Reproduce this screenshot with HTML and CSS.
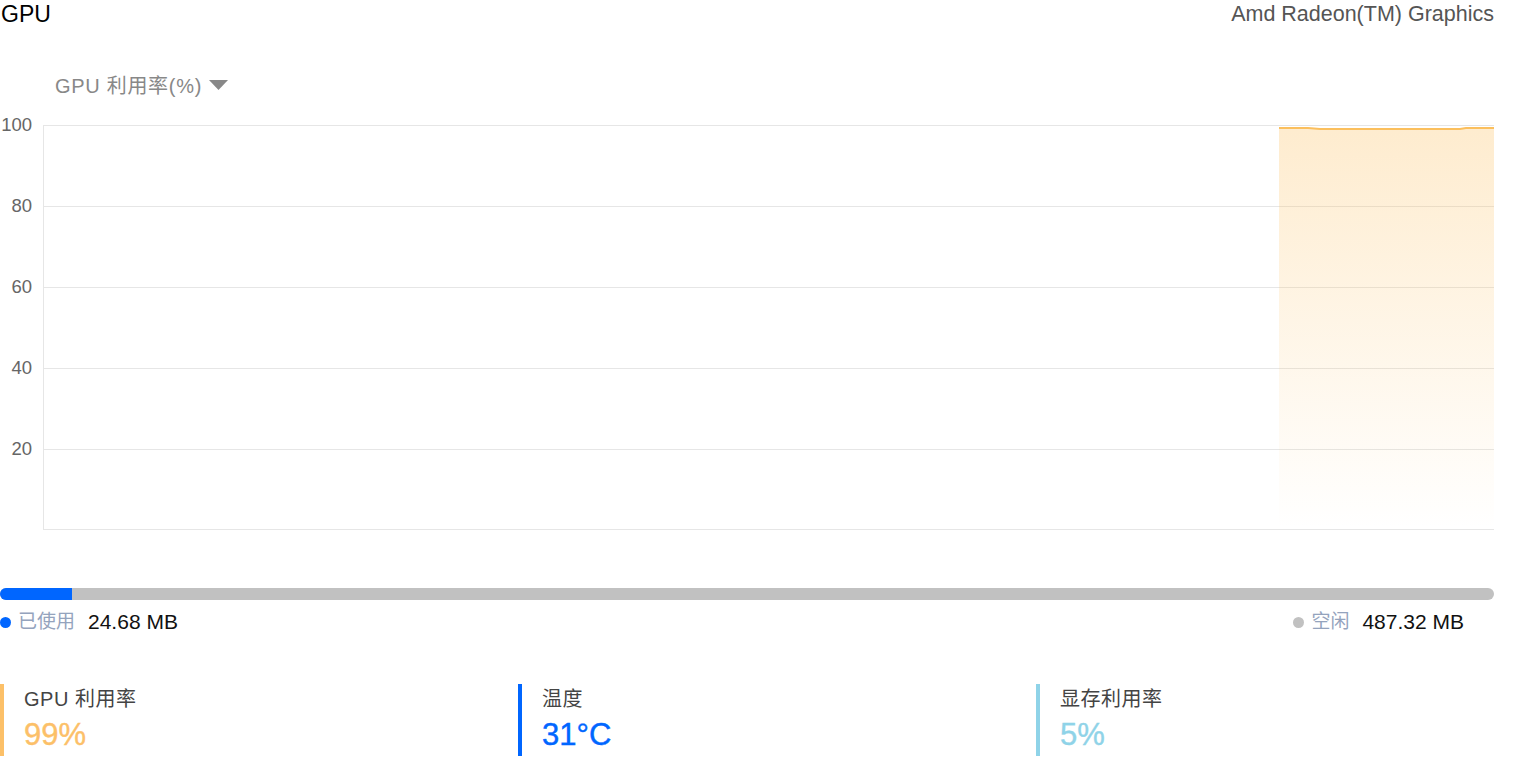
FILE: index.html
```html
<!DOCTYPE html>
<html lang="zh-CN">
<head>
  <meta charset="UTF-8" />
  <meta name="viewport" content="width=device-width, initial-scale=1" />
  <title>GPU</title>
  <link rel="stylesheet" href="styles.css">
</head>
<body>

  <div class="panel">
    <div class="cabecera">
      <span class="titulo">GPU</span>
      <span class="modelo">Amd Radeon(TM) Graphics</span>
    </div>

    <div class="grafica">
      <div class="grafica-titulo">
        GPU 利用率(%)
        <svg class="caret" width="19" height="10" viewBox="0 0 19 10"><path d="M0 0 L19 0 L9.5 10 Z" fill="#888"/></svg>
      </div>
      <svg class="lienzo" width="1494" height="440" viewBox="0 0 1494 440">
        <defs>
          <linearGradient id="relleno" x1="0" y1="0" x2="0" y2="1">
            <stop offset="0" stop-color="#fcbf5e" stop-opacity="0.3"/>
            <stop offset="1" stop-color="#fcbf5e" stop-opacity="0"/>
          </linearGradient>
        </defs>
        <g class="rejilla">
          <line x1="43" y1="15.5" x2="1494" y2="15.5"/>
          <line x1="43" y1="96.5" x2="1494" y2="96.5"/>
          <line x1="43" y1="177.5" x2="1494" y2="177.5"/>
          <line x1="43" y1="258.5" x2="1494" y2="258.5"/>
          <line x1="43" y1="339.5" x2="1494" y2="339.5"/>
          <line x1="43" y1="419.5" x2="1494" y2="419.5"/>
          <line x1="43.5" y1="15" x2="43.5" y2="420"/>
        </g>
        <g class="etiquetas">
          <text x="32" y="16">100</text>
          <text x="32" y="97">80</text>
          <text x="32" y="178">60</text>
          <text x="32" y="259">40</text>
          <text x="32" y="340">20</text>
        </g>
        <path d="M1279 18 L1308 18 L1320 19 L1460 19 L1466 18 L1494 18 L1494 419 L1279 419 Z" fill="url(#relleno)"/>
        <polyline points="1279,18 1308,18 1320,19 1460,19 1466,18 1494,18" fill="none" stroke="#fbbf5d" stroke-width="2"/>
      </svg>
    </div>

    <div class="barra">
      <div class="barra-uso" style="width: 4.82%"></div>
    </div>
    <div class="leyenda">
      <div class="leyenda-item">
        <span class="punto azul"></span>
        <span class="leyenda-nombre">已使用</span>
        <span class="leyenda-valor">24.68 MB</span>
      </div>
      <div class="leyenda-item">
        <span class="punto gris"></span>
        <span class="leyenda-nombre">空闲</span>
        <span class="leyenda-valor">487.32 MB</span>
      </div>
    </div>

    <div class="datos">
      <div class="dato naranja">
        <div class="dato-nombre">GPU 利用率</div>
        <div class="dato-valor">99%</div>
      </div>
      <div class="dato azul">
        <div class="dato-nombre">温度</div>
        <div class="dato-valor">31°C</div>
      </div>
      <div class="dato celeste">
        <div class="dato-nombre">显存利用率</div>
        <div class="dato-valor">5%</div>
      </div>
    </div>
  </div>

</body>
</html>
```

FILE: styles.css
```css
body {
  font-family: "Liberation Sans", "Noto Sans CJK SC", sans-serif;
  background-color: #fff;
  margin: 0;
  padding: 0;
}
.panel {
  width: 1494px;
}
.cabecera {
  display: flex;
  justify-content: space-between;
  align-items: center;
  height: 28px;
}
.titulo {
  font-size: 23px;
  color: #000;
  padding-left: 1px;
}
.modelo {
  font-size: 21.5px;
  color: #555;
}
.grafica {
  margin-top: 44px;
}
.grafica-titulo {
  display: flex;
  align-items: center;
  gap: 7px;
  height: 24px;
  padding-left: 55px;
  font-size: 20px;
  letter-spacing: 0.7px;
  color: #888;
}
.caret {
  margin-top: 1px;
}
.lienzo {
  display: block;
  margin-top: 14px;
}
.rejilla line {
  stroke: #e6e6e6;
  stroke-width: 1;
}
.etiquetas text {
  font-family: "Liberation Sans", sans-serif;
  font-size: 18.5px;
  fill: #666;
  text-anchor: end;
  dominant-baseline: middle;
}
.barra {
  margin-top: 38px;
  height: 12px;
  border-radius: 6px;
  background: #c1c1c1;
  overflow: hidden;
}
.barra-uso {
  height: 100%;
  background: #0066ff;
}
.leyenda {
  display: flex;
  justify-content: space-between;
  margin-top: 9px;
  padding-right: 30px;
  height: 26px;
}
.leyenda-item {
  display: flex;
  align-items: center;
}
.punto {
  width: 11px;
  height: 11px;
  border-radius: 50%;
  margin-right: 7px;
}
.punto.azul {
  background: #0066ff;
}
.punto.gris {
  background: #c1c1c1;
}
.leyenda-nombre {
  font-size: 19px;
  color: #94a3bd;
  margin-right: 13px;
  line-height: 24px;
}
.leyenda-valor {
  font-size: 21px;
  color: #111;
}
.datos {
  display: grid;
  grid-template-columns: repeat(3, 518px);
  margin-top: 49px;
}
.dato {
  border-left: 4px solid;
  padding: 2px 0 0 20px;
  height: 70px;
}
.dato.naranja {
  border-color: #fcc068;
}
.dato.azul {
  border-color: #0066ff;
}
.dato.celeste {
  border-color: #8fd3e8;
}
.dato-nombre {
  font-size: 20px;
  letter-spacing: 0.5px;
  color: #444;
  line-height: 26px;
}
.dato-valor {
  font-size: 31px;
  line-height: 40px;
  margin-top: 3px;
  -webkit-text-stroke: 0.4px currentColor;
}
.naranja .dato-valor {
  color: #fcc068;
}
.azul .dato-valor {
  color: #0066ff;
}
.celeste .dato-valor {
  color: #8fd3e8;
}
```
